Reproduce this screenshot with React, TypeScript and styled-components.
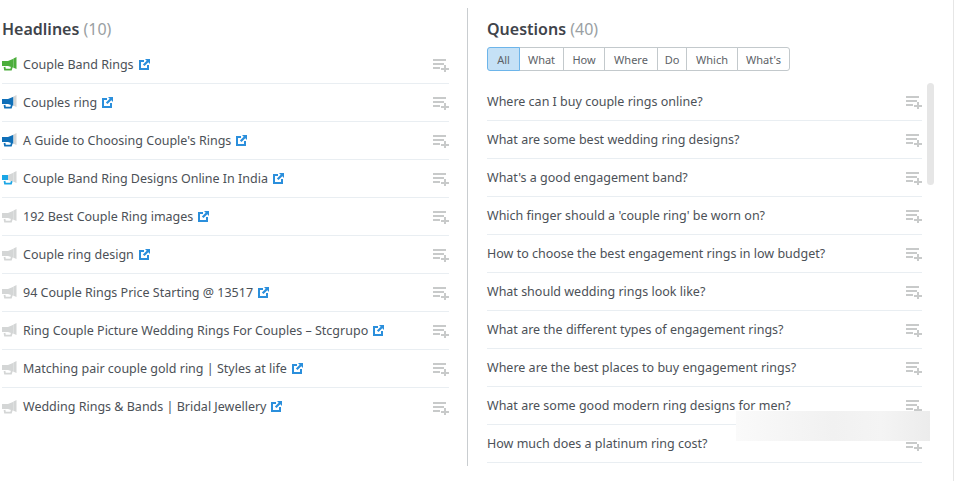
import React from "react";
import styled, { createGlobalStyle } from "styled-components";

type Level = "green" | "blue" | "sky" | "none";

const headlines: { text: string; level: Level }[] = [
  { text: "Couple Band Rings", level: "green" },
  { text: "Couples ring", level: "blue" },
  { text: "A Guide to Choosing Couple's Rings", level: "blue" },
  { text: "Couple Band Ring Designs Online In India", level: "sky" },
  { text: "192 Best Couple Ring images", level: "none" },
  { text: "Couple ring design", level: "none" },
  { text: "94 Couple Rings Price Starting @ 13517", level: "none" },
  { text: "Ring Couple Picture Wedding Rings For Couples – Stcgrupo", level: "none" },
  { text: "Matching pair couple gold ring | Styles at life", level: "none" },
  { text: "Wedding Rings & Bands | Bridal Jewellery", level: "none" },
];

const questions = [
  "Where can I buy couple rings online?",
  "What are some best wedding ring designs?",
  "What's a good engagement band?",
  "Which finger should a 'couple ring' be worn on?",
  "How to choose the best engagement rings in low budget?",
  "What should wedding rings look like?",
  "What are the different types of engagement rings?",
  "Where are the best places to buy engagement rings?",
  "What are some good modern ring designs for men?",
  "How much does a platinum ring cost?",
];

const filters = [
  { label: "All", width: 33 },
  { label: "What", width: 45 },
  { label: "How", width: 42 },
  { label: "Where", width: 54 },
  { label: "Do", width: 30 },
  { label: "Which", width: 52 },
  { label: "What's", width: 53 },
];

const GlobalStyle = createGlobalStyle`
  html, body {
    margin: 0;
    padding: 0;
    background: #fff;
  }
  body {
    font-family: "Noto Sans", "Open Sans", sans-serif;
    color: #4a4f55;
  }
`;

const Page = styled.div`
  position: relative;
  box-sizing: border-box;
  width: 954px;
  height: 481px;
  padding-top: 8px;
  display: flex;
  align-items: flex-start;
  border-right: 1px solid #e6e6e6;
  overflow: hidden;
`;

const LeftPanel = styled.section`
  box-sizing: border-box;
  width: 468px;
  height: 458px;
  padding: 10px 18px 0 2px;
  border-right: 1px solid #c9cdd0;
`;

const RightPanel = styled.section`
  position: relative;
  box-sizing: border-box;
  width: 466px;
  height: 473px;
  padding: 10px 0 0 19px;
`;

const Title = styled.h2`
  margin: 0;
  font-size: 16px;
  line-height: 22px;
  font-weight: 600;
  color: #3f444b;
`;

const Count = styled.span`
  color: #9a9fa3;
  font-weight: 400;
`;

const Filters = styled.div`
  display: flex;
  height: 24px;
  margin-top: 7px;
`;

const Filter = styled.button<{ $active?: boolean; $width: number }>`
  box-sizing: border-box;
  width: ${(p) => p.$width}px;
  height: 24px;
  padding: 0;
  margin-left: -1px;
  font: 400 11px "Noto Sans", sans-serif;
  color: #5d6267;
  background: ${(p) => (p.$active ? "#c5e1f6" : "#fff")};
  border: 1px solid ${(p) => (p.$active ? "#6db5ea" : "#c3c9cc")};
  position: ${(p) => (p.$active ? "relative" : "static")};

  &:first-child {
    margin-left: 0;
    border-radius: 3px 0 0 3px;
  }
  &:last-child {
    border-radius: 0 3px 3px 0;
  }
`;

const HeadlineList = styled.ul`
  list-style: none;
  margin: 6px 0 0;
  padding: 0;
`;

const QuestionList = styled.ul`
  list-style: none;
  margin: 12px 0 0;
  padding: 0;
  width: 435px;
`;

const Row = styled.li`
  box-sizing: border-box;
  height: 38px;
  padding-bottom: 1px;
  display: flex;
  align-items: center;
  border-bottom: 1px solid #e9eef2;
  font-size: 12.5px;
  color: #4c5157;
`;

const HeadlineRow = styled(Row)`
  &:last-child {
    border-bottom: none;
  }
`;

const RowText = styled.span`
  white-space: nowrap;
`;

const Spacer = styled.span`
  flex: 1;
`;

const Megaphone = styled.svg`
  flex: none;
  width: 15px;
  height: 14px;
  margin-right: 6px;
`;

const External = styled.svg`
  flex: none;
  width: 11px;
  height: 11px;
  margin-left: 5px;
`;

const AddIcon = styled.svg`
  flex: none;
  width: 16px;
  height: 13px;
  margin-top: 3px;
`;

const ScrollThumb = styled.div`
  position: absolute;
  left: 459px;
  top: 75px;
  width: 7px;
  height: 102px;
  border-radius: 4px;
  background: #e6e6e6;
`;

const BlurPatch = styled.div`
  position: absolute;
  left: 736px;
  top: 411px;
  width: 194px;
  height: 30px;
  background: linear-gradient(90deg, #fafafa 0%, #f1f1f1 50%, #f4f4f4 75%, #ececec 100%);
`;

const shades: Record<Level, [string, string, string]> = {
  green: ["#4cae3c", "#4cae3c", "#4cae3c"],
  blue: ["#0f6fb8", "#0f6fb8", "#d4d6d6"],
  sky: ["#1ba6e6", "#d4d6d6", "#d4d6d6"],
  none: ["#d4d6d6", "#d4d6d6", "#d4d6d6"],
};

const MegaphoneIcon = ({ level }: { level: Level }) => {
  const [low, mid, high] = shades[level];
  return (
    <Megaphone viewBox="0 0 15 14">
      <path d="M0 4h6v5H0z" fill={low} />
      <path d="M2.500 10l.5 2.700h6l.8-2.700" fill="none" stroke={low} strokeWidth="1.800" />
      <path d="M6 4l5.500-2.200v9L6 9z" fill={mid} />
      <path d="M11.500 1.600L14.500 0v12l-3-1.200z" fill={high} />
    </Megaphone>
  );
};

const ExternalIcon = () => (
  <External viewBox="0 0 11 11">
    <path d="M5 2H1v8h8V6" fill="none" stroke="#2b8fdc" strokeWidth="2" />
    <path d="M6 0h5v5L9.300 3.300 5.500 7.100 3.900 5.500 7.700 1.700z" fill="#2b8fdc" />
  </External>
);

const AddToListIcon = () => (
  <AddIcon viewBox="0 0 16 13">
    <path d="M0 0h13v2H0zM0 4h11v2H0zM0 8h7v2H0z" fill="#c8caca" />
    <path d="M11 6h2v3h3v2h-3v2h-2v-2H8V9h3z" fill="#c8caca" />
  </AddIcon>
);

const App = () => (
  <>
    <GlobalStyle />
    <Page>
      <LeftPanel>
        <Title>
          Headlines <Count>(10)</Count>
        </Title>
        <HeadlineList>
          {headlines.map((h) => (
            <HeadlineRow key={h.text}>
              <MegaphoneIcon level={h.level} />
              <RowText>{h.text}</RowText>
              <ExternalIcon />
              <Spacer />
              <AddToListIcon />
            </HeadlineRow>
          ))}
        </HeadlineList>
      </LeftPanel>
      <RightPanel>
        <Title>
          Questions <Count>(40)</Count>
        </Title>
        <Filters>
          {filters.map((f) => (
            <Filter key={f.label} $active={f.label === "All"} $width={f.width}>
              {f.label}
            </Filter>
          ))}
        </Filters>
        <QuestionList>
          {questions.map((q) => (
            <Row key={q}>
              <RowText>{q}</RowText>
              <Spacer />
              <AddToListIcon />
            </Row>
          ))}
        </QuestionList>
        <ScrollThumb />
      </RightPanel>
      <BlurPatch />
    </Page>
  </>
);

export default App;
